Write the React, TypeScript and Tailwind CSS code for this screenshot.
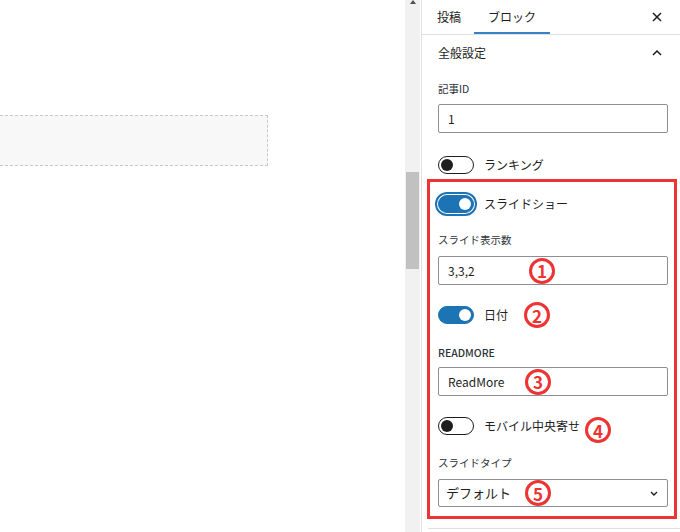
import clsx from 'clsx';
import { ReactNode } from 'react';

function Toggle({ on, focus }: { on?: boolean; focus?: boolean }) {
  return (
    <span
      className={clsx(
        'relative inline-block h-[18px] w-[36px] shrink-0 rounded-full border',
        on ? 'border-[#1c74b4] bg-[#1c74b4]' : 'border-[#1e1e1e] bg-white',
        focus && 'shadow-[0_0_0_1px_#fff,0_0_0_3px_#1c74b4]'
      )}
    >
      <span
        className={clsx(
          'absolute top-[2px] h-[12px] w-[12px] rounded-full',
          on ? 'right-[2px] bg-white' : 'left-[2px] bg-[#1e1e1e]'
        )}
      />
    </span>
  );
}

function Mark({ n, className }: { n: string; className: string }) {
  return (
    <span
      className={clsx(
        'absolute top-1/2 flex h-[26px] w-[26px] -translate-y-1/2 items-center justify-center rounded-full',
        'border-[3px] border-[#ee3333] text-[17px] font-bold leading-none text-[#ee3333]',
        className
      )}
    >
      {n}
    </span>
  );
}

function Label({ children, className }: { children: ReactNode; className: string }) {
  return <div className={clsx('h-[16px] text-[10.5px] leading-[16px] text-[#2c3338]', className)}>{children}</div>;
}

function Input({ value, children, className }: { value: string; children?: ReactNode; className: string }) {
  return (
    <div
      className={clsx(
        'relative flex h-[29px] items-center rounded-[2px] border border-[#8c8f94] pl-[9px] text-[12px] text-[#1e1e1e]',
        className
      )}
    >
      {value}
      {children}
    </div>
  );
}

function ToggleRow({ label, on, focus, children, className }: {
  label: string;
  on?: boolean;
  focus?: boolean;
  children?: ReactNode;
  className: string;
}) {
  return (
    <div className={clsx('relative flex h-[18px] items-center gap-[10px] text-[12px] text-[#1e1e1e]', className)}>
      <Toggle on={on} focus={focus} />
      <span>{label}</span>
      {children}
    </div>
  );
}

export default function App() {
  return (
    <div className="flex h-[532px] w-[680px] overflow-hidden bg-white font-[family-name:'Noto_Sans_CJK_JP',sans-serif]">
      {/* editor canvas */}
      <div className="w-[405px] shrink-0 pt-[115px]">
        <div className="h-[51px] w-[268px] border border-l-0 border-dashed border-[#c8c8c8] bg-[#f8f8f8]" />
      </div>

      {/* scrollbar */}
      <div className="flex w-[15px] shrink-0 flex-col items-center bg-[#f1f1f1]">
        <svg width="8" height="4" viewBox="0 0 8 4">
          <path d="M1 4 L4 0 L7 4 Z" fill="#505050" />
        </svg>
        <div className="mt-[168px] h-[97px] w-[13px] bg-[#c1c1c1]" />
      </div>

      {/* sidebar */}
      <div className="ml-[1px] w-[259px] shrink-0 border-l border-[#e0e0e0]">
        <div className="flex h-[35px] items-stretch border-b border-[#e0e0e0] text-[12px] text-[#1e1e1e]">
          <div className="flex items-center pl-[15px] pr-[13px]">投稿</div>
          <div className="flex w-[76px] items-center justify-center border-b-2 border-[#3582c4] pt-[2px]">ブロック</div>
          <div className="ml-auto flex items-center pr-[18px]">
            <svg width="10" height="10" viewBox="0 0 10 10">
              <path d="M1 1 L9 9 M9 1 L1 9" stroke="#1e1e1e" strokeWidth="1.5" />
            </svg>
          </div>
        </div>

        <div className="pl-[16px] pr-[12px]">
          <div className="flex h-[36px] items-center justify-between text-[12px] text-[#1e1e1e]">
            <span>全般設定</span>
            <svg width="10" height="6" viewBox="0 0 10 6" className="mr-[6px]">
              <path d="M1 5 L5 1 L9 5" fill="none" stroke="#1e1e1e" strokeWidth="1.5" />
            </svg>
          </div>

          <Label className="mt-[10px]">記事ID</Label>
          <Input value="1" className="mt-[7px]" />

          <ToggleRow label="ランキング" className="mt-[23px]" />

          <div className="-ml-[11px] -mr-[9px] mt-[5px] border-[3px] border-[#ee3333] pb-[9px] pl-[8px] pr-[6px]">
            <ToggleRow label="スライドショー" on focus className="mt-[13px]" />

            <Label className="mt-[19px]">スライド表示数</Label>
            <Input value="3,3,2" className="mt-[8px]">
              <Mark n="1" className="left-[90px]" />
            </Input>

            <ToggleRow label="日付" on className="mt-[21px]">
              <Mark n="2" className="left-[86px]" />
            </ToggleRow>

            <Label className="mt-[21px] font-medium">READMORE</Label>
            <Input value="ReadMore" className="mt-[6px]">
              <Mark n="3" className="left-[86px]" />
            </Input>

            <ToggleRow label="モバイル中央寄せ" className="mt-[21px]">
              <Mark n="4" className="left-[147px] mt-[4px]" />
            </ToggleRow>

            <Label className="mt-[20px]">スライドタイプ</Label>
            <div className="relative mt-[8px] flex h-[28px] items-center rounded-[2px] border border-[#8c8f94] pl-[7px] text-[13px] text-[#1e1e1e]">
              デフォルト
              <Mark n="5" className="left-[86px]" />
              <svg width="8" height="5" viewBox="0 0 8 5" className="absolute right-[9px]">
                <path d="M1 1 L4 4 L7 1" fill="none" stroke="#1e1e1e" strokeWidth="1.4" />
              </svg>
            </div>
          </div>
        </div>

        <div className="ml-[6px] mt-[9px] border-t border-[#e0e0e0]" />
      </div>
    </div>
  );
}
